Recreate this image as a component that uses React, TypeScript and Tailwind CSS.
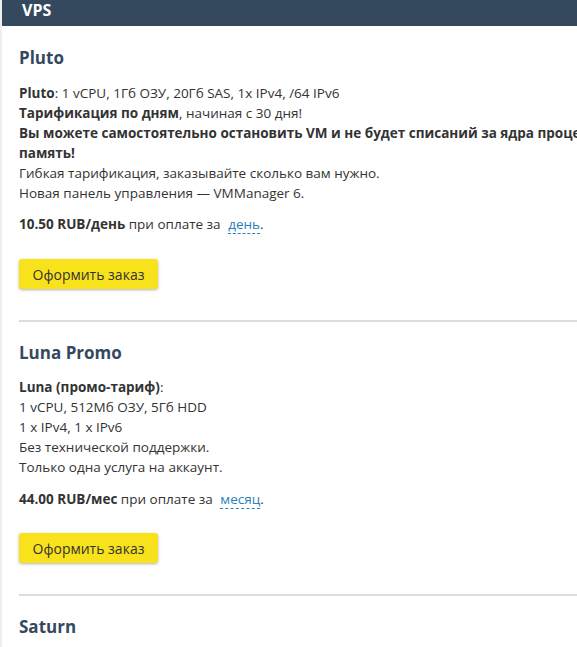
import React from "react"

function OrderButton() {
  return (
    <button className="h-[30px] w-[139px] rounded-[3px] bg-[#f7e21b] text-[14px] text-[#333] shadow-[0_1px_3px_rgba(0,0,0,0.3)]">
      Оформить заказ
    </button>
  )
}

function Price({ amount, unit, period }: { amount: string; unit: string; period: string }) {
  return (
    <p className="leading-[20px]">
      <b>{amount} RUB/{unit}</b> при оплате за{" "}
      <span className="ml-1 border-b border-dashed border-[#2a7fb8] text-[#2a7fb8]">{period}</span>.
    </p>
  )
}

export default function App() {
  return (
    <div className="h-[647px] w-[577px] overflow-hidden bg-white font-['Open_Sans',sans-serif] text-[13.5px] text-[#333]">
      <div className="h-full border-l-2 border-[#eeeeee]">
        <div className="flex h-[26px] items-end bg-[#34495e] pb-[8px] pl-[20px]">
          <span className="text-[16px] font-bold leading-none text-white">VPS</span>
        </div>

        <div className="pl-[17px]">
          {/* Pluto */}
          <section className="border-b-2 border-[#dddddd] pt-[20px] pb-[31px]">
            <h2 className="text-[17px] font-bold leading-[24px] text-[#34495e]">Pluto</h2>
            <div className="mt-[13px] leading-[20px]">
              <p><b>Pluto</b>: 1 vCPU, 1Гб ОЗУ, 20Гб SAS, 1x IPv4, /64 IPv6</p>
              <p><b>Тарификация по дням</b>, начиная с 30 дня!</p>
              <p className="font-bold">
                <span className="whitespace-nowrap">Вы можете самостоятельно остановить VM и не будет списаний за ядра процессора и</span>
                <br />
                память!
              </p>
              <p>Гибкая тарификация, заказывайте сколько вам нужно.</p>
              <p>Новая панель управления — VMManager 6.</p>
            </div>
            <div className="mt-[11px]">
              <Price amount="10.50" unit="день" period="день" />
            </div>
            <div className="mt-[25px]">
              <OrderButton />
            </div>
          </section>

          {/* Luna Promo */}
          <section className="border-b-2 border-[#dddddd] pt-[19px] pb-[31px]">
            <h2 className="text-[17px] font-bold leading-[24px] text-[#34495e]">Luna Promo</h2>
            <div className="mt-[12px] leading-[20px]">
              <p><b>Luna (промо-тариф)</b>:</p>
              <p>1 vCPU, 512Мб ОЗУ, 5Гб HDD</p>
              <p>1 x IPv4, 1 x IPv6</p>
              <p>Без технической поддержки.</p>
              <p>Только одна услуга на аккаунт.</p>
            </div>
            <div className="mt-[12px]">
              <Price amount="44.00" unit="мес" period="месяц" />
            </div>
            <div className="mt-[24px]">
              <OrderButton />
            </div>
          </section>

          {/* Saturn */}
          <section className="pt-[19px]">
            <h2 className="text-[17px] font-bold leading-[24px] text-[#34495e]">Saturn</h2>
          </section>
        </div>
      </div>
    </div>
  )
}
